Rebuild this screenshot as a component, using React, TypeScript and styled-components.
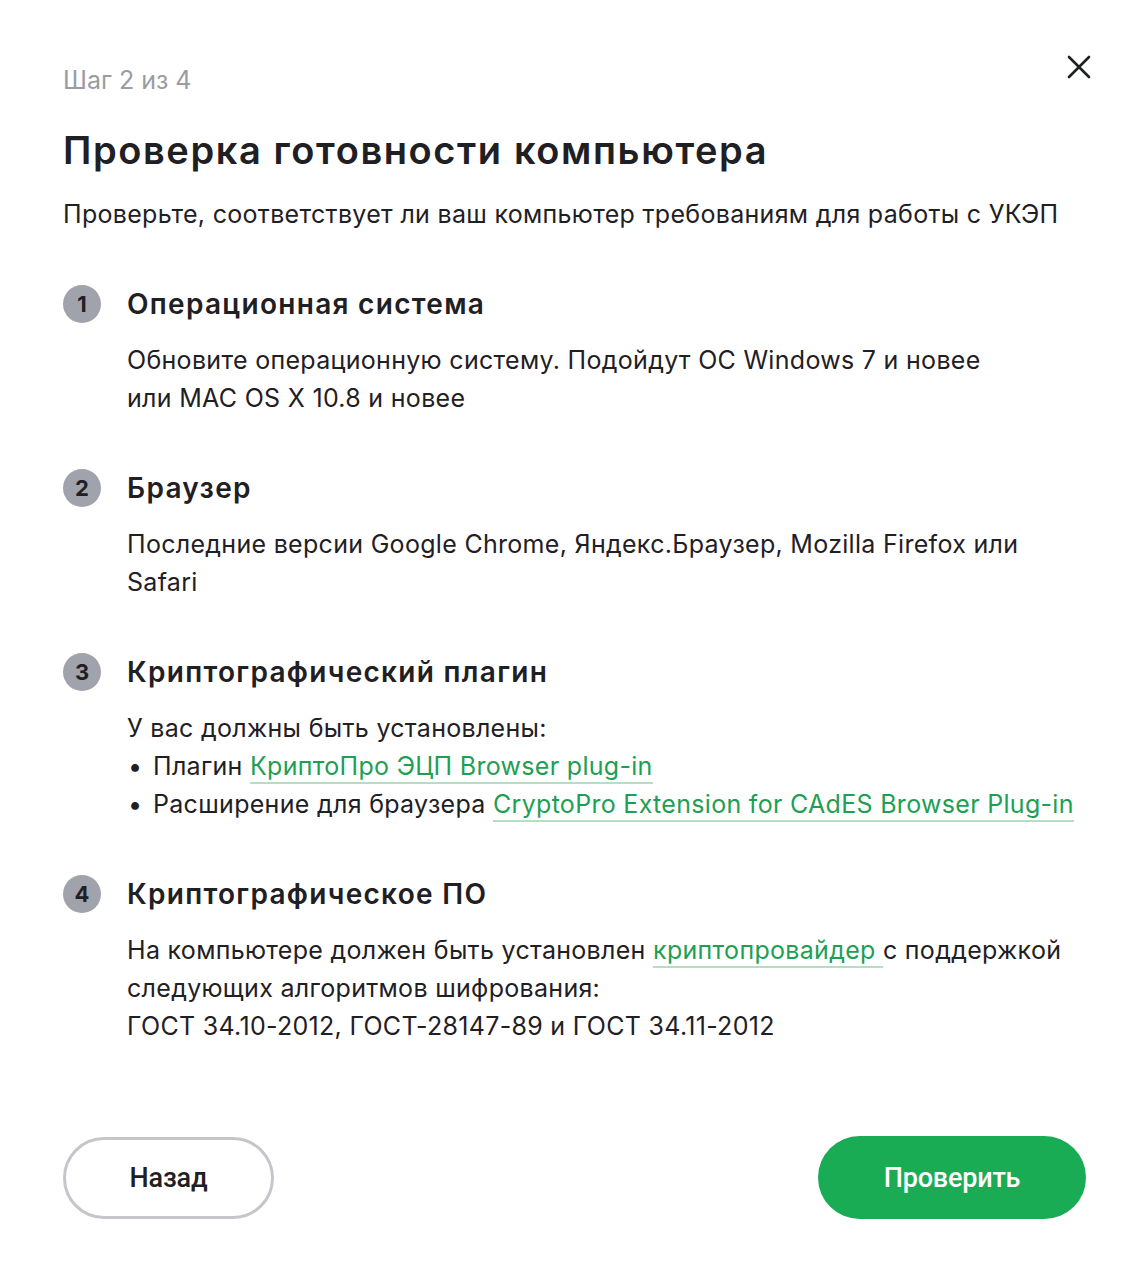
import React from "react";
import styled, { createGlobalStyle } from "styled-components";

const GlobalStyle = createGlobalStyle`
  body {
    margin: 0;
    background: #ffffff;
    font-family: Inter, "Noto Sans", sans-serif;
    color: #1f2024;
  }
`;

const Modal = styled.div`
  position: relative;
  box-sizing: border-box;
  width: 1148px;
  min-height: 1282px;
  padding: 64px 62px 63px 63px;
  display: flex;
  flex-direction: column;
`;

const CloseButton = styled.button`
  position: absolute;
  top: 52px;
  right: 54px;
  width: 30px;
  height: 30px;
  padding: 0;
  border: none;
  background: none;
  display: flex;
  align-items: center;
  justify-content: center;
  cursor: pointer;
`;

const StepLabel = styled.div`
  font-size: 25px;
  line-height: 32px;
  color: #9a9ca3;
`;

const Title = styled.h1`
  margin: 30px 0 0;
  font-size: 38px;
  line-height: 48px;
  font-weight: 600;
  letter-spacing: 1.6px;
`;

const Subtitle = styled.p`
  margin: 21px 0 0;
  font-size: 25px;
  line-height: 38px;
  letter-spacing: 0.3px;
`;

const Steps = styled.ol`
  list-style: none;
  margin: 51px 0 0;
  padding: 0;
  display: flex;
  flex-direction: column;
  gap: 51px;
`;

const Step = styled.li`
  display: grid;
  grid-template-columns: 38px 1fr;
  column-gap: 26px;
  row-gap: 17px;
`;

const Badge = styled.span`
  width: 38px;
  height: 38px;
  margin-top: 1px;
  border-radius: 50%;
  background: #a0a3ab;
  color: #1f2024;
  font-size: 22px;
  font-weight: 700;
  display: flex;
  align-items: center;
  justify-content: center;
`;

const StepTitle = styled.h2`
  margin: 0;
  font-size: 28px;
  line-height: 40px;
  font-weight: 600;
  letter-spacing: 1.3px;
`;

const StepBody = styled.div`
  grid-column: 2;
  font-size: 25px;
  line-height: 38px;
  letter-spacing: 0.3px;
`;

const Bullets = styled.ul`
  list-style: none;
  margin: 0;
  padding: 0;
`;

const Bullet = styled.li`
  position: relative;
  padding-left: 26px;
  &::before {
    content: "•";
    position: absolute;
    left: 1px;
  }
`;

const Link = styled.a`
  color: #1e9f52;
  text-decoration: none;
  border-bottom: 2px solid #b3e0c3;
  padding-bottom: 1px;
`;

const Footer = styled.div`
  margin-top: auto;
  display: flex;
  justify-content: space-between;
  align-items: center;
`;

const Button = styled.button<{ $primary?: boolean }>`
  box-sizing: border-box;
  height: ${(p) => (p.$primary ? "83px" : "82px")};
  width: ${(p) => (p.$primary ? "268px" : "211px")};
  border-radius: 42px;
  border: ${(p) => (p.$primary ? "none" : "3px solid #c5c6cb")};
  background: ${(p) => (p.$primary ? "#1aab55" : "#ffffff")};
  color: ${(p) => (p.$primary ? "#ffffff" : "#1f2024")};
  font-family: Roboto, "Liberation Sans", sans-serif;
  font-size: 27px;
  font-weight: 500;
  letter-spacing: -0.2px;
  cursor: pointer;
`;

const steps = [
  {
    title: "Операционная система",
    body: (
      <>
        Обновите операционную систему. Подойдут ОС Windows 7 и новее
        <br />
        или MAC OS X 10.8 и новее
      </>
    ),
  },
  {
    title: "Браузер",
    body: (
      <>
        Последние версии Google Chrome, Яндекс.Браузер, Mozilla Firefox или
        <br />
        Safari
      </>
    ),
  },
  {
    title: "Криптографический плагин",
    body: (
      <>
        У вас должны быть установлены:
        <Bullets>
          <Bullet>
            Плагин <Link href="#">КриптоПро ЭЦП Browser plug-in</Link>
          </Bullet>
          <Bullet>
            Расширение для браузера{" "}
            <Link href="#">CryptoPro Extension for CAdES Browser Plug-in</Link>
          </Bullet>
        </Bullets>
      </>
    ),
  },
  {
    title: "Криптографическое ПО",
    body: (
      <>
        На компьютере должен быть установлен{" "}
        <Link href="#">криптопровайдер </Link> с поддержкой
        <br />
        следующих алгоритмов шифрования:
        <br />
        ГОСТ 34.10-2012, ГОСТ-28147-89 и ГОСТ 34.11-2012
      </>
    ),
  },
];

export default function App() {
  return (
    <Modal>
      <GlobalStyle />
      <CloseButton aria-label="Закрыть">
        <svg width="26" height="26" viewBox="0 0 26 26">
          <path
            d="M3 3 L23 23 M23 3 L3 23"
            stroke="#1f2024"
            strokeWidth="2.6"
            strokeLinecap="round"
          />
        </svg>
      </CloseButton>
      <StepLabel>Шаг 2 из 4</StepLabel>
      <Title>Проверка готовности компьютера</Title>
      <Subtitle>
        Проверьте, соответствует ли ваш компьютер требованиям для работы с УКЭП
      </Subtitle>
      <Steps>
        {steps.map((s, i) => (
          <Step key={s.title}>
            <Badge>{i + 1}</Badge>
            <StepTitle>{s.title}</StepTitle>
            <StepBody>{s.body}</StepBody>
          </Step>
        ))}
      </Steps>
      <Footer>
        <Button>Назад</Button>
        <Button $primary>Проверить</Button>
      </Footer>
    </Modal>
  );
}
